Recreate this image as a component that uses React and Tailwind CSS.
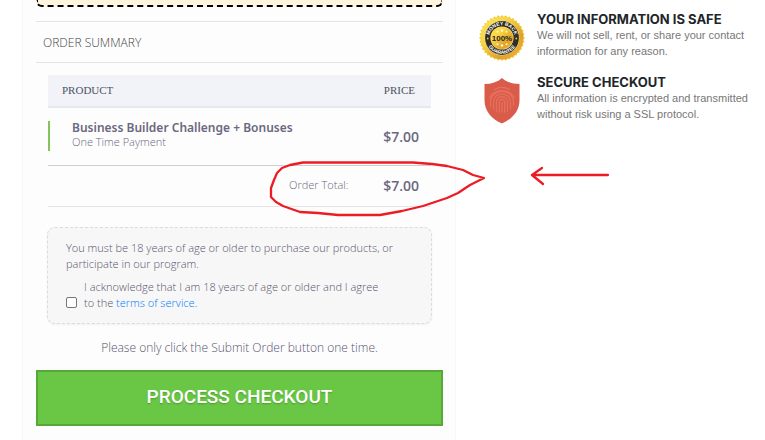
import React, { useState } from 'react';

const items = [
    { name: 'Business Builder Challenge + Bonuses', note: 'One Time Payment', price: '$7.00' },
];

function GuaranteeSeal() {
    const teeth = Array.from({ length: 36 }, (_, i) => i * 10);
    return (
        <svg viewBox="0 0 46 46" className="h-[46px] w-[46px]" role="img" aria-label="Money back guarantee">
            <defs>
                <linearGradient id="gold" x1="0" y1="0" x2="1" y2="1">
                    <stop offset="0" stopColor="#fbe653" />
                    <stop offset="0.35" stopColor="#f8d443" />
                    <stop offset="0.7" stopColor="#dfa229" />
                    <stop offset="1" stopColor="#f3bd33" />
                </linearGradient>
                <path id="sealTop" d="M10.2 23a12.8 12.8 0 0 1 25.6 0" />
                <path id="sealBottom" d="M7 23a16 16 0 0 0 32 0" />
            </defs>
            {teeth.map(a => (
                <path key={a} d="M20.8 2.5 L23 0 L25.2 2.5 Z" fill="#f0c236" transform={`rotate(${a} 23 23)`} />
            ))}
            <circle cx="23" cy="23" r="21.5" fill="url(#gold)" />
            <circle cx="23" cy="23" r="17.4" fill="#f7e27c" />
            <circle cx="23" cy="23" r="16.9" fill="#2f2c29" />
            <circle cx="23" cy="23" r="11.6" fill="#f7dc6a" />
            <circle cx="23" cy="23" r="11" fill="url(#gold)" />
            <g fill="#fff6cf">
                <circle cx="23" cy="15.5" r="1.3" />
                <circle cx="18.5" cy="16.8" r="1" />
                <circle cx="27.5" cy="16.8" r="1" />
                <circle cx="23" cy="30.5" r="1.3" />
                <circle cx="18.5" cy="29.2" r="1" />
                <circle cx="27.5" cy="29.2" r="1" />
            </g>
            <circle cx="8.7" cy="23.5" r="0.9" fill="#f3c63a" />
            <circle cx="37.3" cy="23.5" r="0.9" fill="#f3c63a" />
            <g className="font-['Liberation_Sans']" fontWeight="700" textAnchor="middle">
                <text fontSize="5" fill="#fff"><textPath href="#sealTop" startOffset="50%">MONEY BACK</textPath></text>
                <text fontSize="5" fill="#fff"><textPath href="#sealBottom" startOffset="50%">GUARANTEE</textPath></text>
                <text x="23" y="25.8" fontSize="8" fill="#2b2620">100%</text>
            </g>
        </svg>
    );
}

function ShieldIcon() {
    return (
        <svg viewBox="0 0 46 46" className="h-[46px] w-[46px]" role="img" aria-label="Secure">
            <path d="M23 0c4.5 4 10.500 6 17.500 6v16c0 11-7 19-17.500 23.500C12.500 41 5.500 33 5.500 22V6C12.500 6 18.500 4 23 0z" fill="#d95c4b" />
            <g fill="none" stroke="#e86f5d" strokeWidth="1.3" strokeLinecap="round">
                <path d="M15.500 11.500c5-2.800 10-2.800 15 0" />
                <path d="M10.800 19.500c5-9 19.500-9 24.400 0" />
                <path d="M11.500 28v-4c0-14 23-14 23 0v3" />
                <path d="M14.500 31v-7c0-10.500 17-10.500 17 0v7" />
                <path d="M17.500 33v-9c0-7 11-7 11 0v9" />
                <path d="M20.300 34V24c0-3.500 5.400-3.500 5.400 0v10" />
                <path d="M23 24.500V34" />
            </g>
        </svg>
    );
}

const assurances = [
    { icon: <GuaranteeSeal />, title: 'YOUR INFORMATION IS SAFE', text: 'We will not sell, rent, or share your contact information for any reason.' },
    { icon: <ShieldIcon />, title: 'SECURE CHECKOUT', text: 'All information is encrypted and transmitted without risk using a SSL protocol.' },
];

// Hand drawn marks over the total row
function Marker() {
    return (
        <svg className="pointer-events-none absolute left-[268px] top-[156px] h-[64px] w-[346px]" viewBox="268 156 346 64" fill="none" stroke="#ed1c24" strokeWidth="2.3" strokeLinecap="round" strokeLinejoin="round" aria-hidden="true">
            <path d="M303 162.5H413L432 164L447 166L463 170L473 175L484 178L470 185L458 193L447 198L423 206L402 211L380 215H338L318 213L300 212L283 206L276 202L271 197V188L274 180L277 173L282 168L290 165Z" />
            <path d="M608 175H532M542 168l-10 7 11 9" />
        </svg>
    );
}

export default function App() {
    const [agreed, setAgreed] = useState(false);

    return (
        <div className="relative grid grid-cols-[434fr_286fr] gap-[23px] bg-white pl-[22px] font-['Open_Sans',sans-serif] text-[#6b6880]">
            <main className="border-x border-[#f7f7f7] bg-[#fdfdfd] pb-4 pl-[13px] pr-3">
                <div className="h-[7px] rounded-b-md border-2 border-t-0 border-dashed border-black bg-[#fdf5de]"></div>

                <h2 className="mt-[14px] border-y border-[#e5e5e5] px-[7px] pb-[9px] pt-[11px] text-[12px] font-light leading-[20px] text-[#444]">ORDER SUMMARY</h2>

                <div className="px-3 pt-3">
                    <table className="w-full border-collapse text-left">
                        <thead className="border-b-2 border-[#e6e8ec] bg-[#f1f3f8] font-['Liberation_Serif',serif] text-[11px] text-[#4d5262]">
                            <tr className="h-8">
                                <th className="pl-[14px] font-normal">PRODUCT</th>
                                <th className="pr-4 text-right font-normal">PRICE</th>
                            </tr>
                        </thead>
                        <tbody>
                            {items.map(item => (
                                <tr key={item.name} className="h-[58px] border-b border-[#cfcfcf]">
                                    <td>
                                        <div className="h-[30px] border-l-2 border-[#84c35a] pl-[22px]">
                                            <div className="font-['Noto_Sans',sans-serif] text-[12px] font-semibold leading-[14px]">{item.name}</div>
                                            <div className="text-[11px] font-light leading-[13px]">{item.note}</div>
                                        </div>
                                    </td>
                                    <td className="pr-3 text-right text-[14px] font-semibold">{item.price}</td>
                                </tr>
                            ))}
                            <tr className="h-[41px] border-b border-[#e5e5e5]">
                                <td className="pr-5 text-right text-[11px] font-light">Order Total:</td>
                                <td className="pr-3 text-right text-[14px] font-semibold">$7.00</td>
                            </tr>
                        </tbody>
                    </table>
                </div>

                <div className="mx-[11px] mt-5 rounded-lg border border-dashed border-[#dcdcdc] bg-[#f7f7f7] py-3 pl-[18px] pr-9 text-[11px] font-light leading-[16px] text-[#57546e] shadow-xs">
                    <p>You must be 18 years of age or older to purchase our products, or participate in our program.</p>
                    <div className="mt-[7px] flex items-end gap-[7px]">
                        <input id="age" type="checkbox" checked={agreed} onChange={e => setAgreed(e.target.checked)} className="mb-[3px] h-[11px] w-[11px] shrink-0 appearance-none rounded-xs border border-[#767676] bg-white checked:bg-blue-600" />
                        <label htmlFor="age" className="pr-4">I acknowledge that I am 18 years of age or older and I agree to the <a href="#terms" className="text-[#007bff]">terms of service</a>.</label>
                    </div>
                </div>

                <p className="mt-[14px] text-center text-[12px] font-light leading-[20px] text-[#57546e]">Please only click the Submit Order button one time.</p>
                <button type="button" className="mt-3 h-14 w-full border-2 border-[#56a837] bg-[#69c745] font-['Roboto',sans-serif] text-[19px] font-medium text-white text-shadow-sm">PROCESS CHECKOUT</button>
            </main>

            <aside className="flex flex-col gap-[14px] pt-3">
                {assurances.map(a => (
                    <section key={a.title} className="flex gap-3">
                        <div className="shrink-0 pt-[3px]">{a.icon}</div>
                        <div>
                            <h3 className="font-['Inter',sans-serif] text-[13px] font-bold leading-[15px] text-[#212529]">{a.title}</h3>
                            <p className="font-['Liberation_Sans',sans-serif] text-[11px] leading-[16px] text-[#777]">{a.text}</p>
                        </div>
                    </section>
                ))}
            </aside>

            <Marker />
        </div>
    );
}
